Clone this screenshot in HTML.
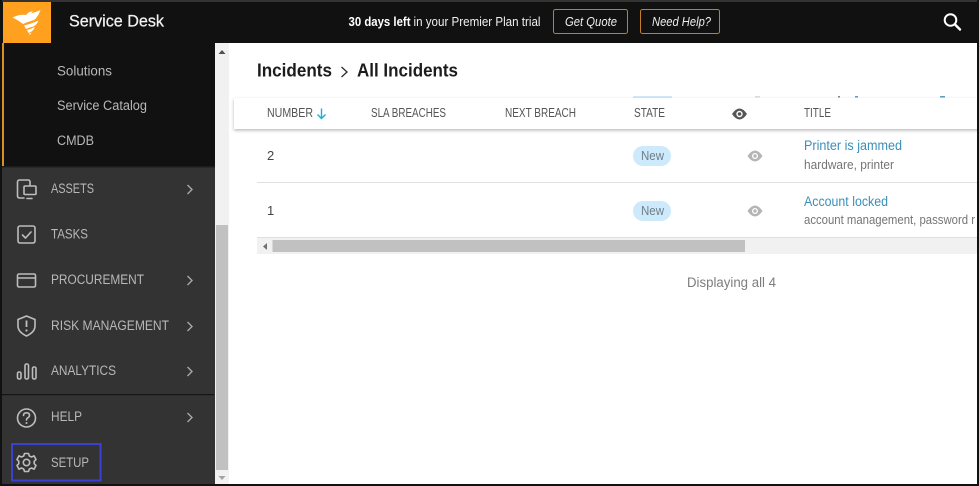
<!DOCTYPE html>
<html><head><meta charset="utf-8"><title>Service Desk</title>
<style>
html,body{margin:0;padding:0;background:#fff;width:979px;height:486px;overflow:hidden}
svg{display:block}
text{font-family:"Liberation Sans",sans-serif}
.nav{font-size:13.5px;fill:#b8b8b8}
.hd{font-size:12.5px;fill:#555}
.ic{fill:none;stroke:#bdbdbd;stroke-width:1.6;stroke-linecap:round;stroke-linejoin:round}
.chev{fill:none;stroke:#a8a8a8;stroke-width:1.4}
</style></head><body>
<svg width="979" height="486" viewBox="0 0 979 486" xmlns="http://www.w3.org/2000/svg">
<rect width="979" height="486" fill="#fff"/>
<!-- header -->
<rect x="0" y="0" width="979" height="43" fill="#111"/>
<rect x="0" y="0" width="979" height="2" fill="#333"/>
<rect x="3" y="2" width="48" height="41" fill="#ffa01f"/>
<!-- logo -->
<path d="M12.500 17.500 Q20 14 26 15 Q29 11 33 11.500 L31 13.500 Q36 12 40.500 10 Q38 17 34 20 Q26 22.500 23 24 Q18 20 12.500 17.500Z" fill="#fff"/>
<path d="M24 25.500 Q32 23.500 38.500 20.500 Q37 24.500 33.500 26.500 Q29 27.500 26 29Z" fill="#fff"/>
<path d="M27 30 Q31 29 35 27 Q33 31 30.500 32 L28.500 33Z" fill="#fff"/>
<path d="M29 33.500 L31.500 32.500 L30 35Z" fill="#fff"/>
<text x="69" y="26.500" font-size="17" fill="#f2f2f2" stroke="#f2f2f2" stroke-width=".25" textLength="95" lengthAdjust="spacingAndGlyphs">Service Desk</text>
<text x="348.500" y="26" font-size="12.500" fill="#fff" font-weight="700" textLength="62" lengthAdjust="spacingAndGlyphs">30 days left</text>
<text x="413.500" y="26" font-size="12.500" fill="#f0f0f0" textLength="127" lengthAdjust="spacingAndGlyphs">in your Premier Plan trial</text>
<rect x="553.500" y="9.500" width="74" height="24" rx="2" fill="none" stroke="#c47f25" stroke-width="1"/>
<text x="565" y="26" font-size="12.500" font-style="italic" fill="#efefef" textLength="52" lengthAdjust="spacingAndGlyphs">Get Quote</text>
<rect x="640.500" y="9.500" width="79" height="24" rx="2" fill="none" stroke="#c47f25" stroke-width="1"/>
<text x="652" y="26" font-size="12.500" font-style="italic" fill="#efefef" textLength="59" lengthAdjust="spacingAndGlyphs">Need Help?</text>
<circle cx="950.500" cy="20" r="5.800" fill="none" stroke="#fff" stroke-width="2"/>
<path d="M955 24.500 L960 29.500" stroke="#fff" stroke-width="2.400" fill="none" stroke-linecap="round"/>

<!-- sidebar -->
<rect x="0" y="43" width="215" height="124" fill="#111"/>
<rect x="2" y="43" width="2" height="123" fill="#d98f22"/>
<rect x="0" y="167" width="215" height="319" fill="#333"/>
<rect x="0" y="166" width="215" height="1.500" fill="#1c1c1c"/>
<rect x="0" y="43" width="2" height="443" fill="#111"/>
<rect x="2" y="394" width="212" height="1.200" fill="#161616"/>
<text x="57" y="75.500" font-size="13.500" fill="#b8b8b8" textLength="55" lengthAdjust="spacingAndGlyphs">Solutions</text>
<text x="57" y="110" font-size="13.500" fill="#b8b8b8" textLength="90" lengthAdjust="spacingAndGlyphs">Service Catalog</text>
<text x="57" y="145" font-size="13.500" fill="#b8b8b8" textLength="37" lengthAdjust="spacingAndGlyphs">CMDB</text>

<text class="nav" x="51" y="193" textLength="43" lengthAdjust="spacingAndGlyphs">ASSETS</text>
<text class="nav" x="51" y="238.500" textLength="37" lengthAdjust="spacingAndGlyphs">TASKS</text>
<text class="nav" x="51" y="284" textLength="93" lengthAdjust="spacingAndGlyphs">PROCUREMENT</text>
<text class="nav" x="51" y="330" textLength="118" lengthAdjust="spacingAndGlyphs">RISK MANAGEMENT</text>
<text class="nav" x="51" y="375" textLength="65" lengthAdjust="spacingAndGlyphs">ANALYTICS</text>
<text class="nav" x="51" y="421" textLength="31" lengthAdjust="spacingAndGlyphs">HELP</text>
<text class="nav" x="51" y="467" textLength="38" lengthAdjust="spacingAndGlyphs">SETUP</text>
<path class="chev" d="M187.500 185 L192 189.500 L187.500 194"/>
<path class="chev" d="M187.500 276 L192 280.500 L187.500 285"/>
<path class="chev" d="M187.500 322 L192 326.500 L187.500 331"/>
<path class="chev" d="M187.500 367 L192 371.500 L187.500 376"/>
<path class="chev" d="M187.500 413 L192 417.500 L187.500 422"/>
<!-- assets icon -->
<path class="ic" d="M24 198 H20 Q17.500 198 17.500 196 V182 Q17.500 180 20 180 H28 Q30 180 30 182 V185"/>
<rect class="ic" x="24" y="186" width="12" height="8.500" rx="1"/>
<path class="ic" d="M27 198.500 H32"/>
<!-- tasks icon -->
<rect class="ic" x="18" y="226" width="17" height="17" rx="2"/>
<path class="ic" d="M22.500 235 L25.500 238 L31 232"/>
<!-- procurement icon -->
<rect class="ic" x="17.500" y="274" width="18" height="13" rx="1.500"/>
<path class="ic" d="M18 278 H35"/>
<!-- risk icon -->
<path class="ic" d="M26.500 316 L35 319.500 V326 Q35 332 26.500 336 Q18 332 18 326 V319.500Z"/>
<path d="M26.500 320.500 V327" stroke="#bdbdbd" stroke-width="1.800" fill="none"/>
<circle cx="26.500" cy="330.500" r="1.100" fill="#bdbdbd"/>
<!-- analytics icon -->
<rect class="ic" x="17.500" y="372" width="3.500" height="7" rx="1.500"/>
<rect class="ic" x="25" y="364" width="3.500" height="15" rx="1.500"/>
<rect class="ic" x="32.500" y="367" width="3.500" height="12" rx="1.500"/>
<!-- help icon -->
<circle class="ic" cx="26.500" cy="418" r="9"/>
<path class="ic" d="M23.500 415.500 Q23.500 412.800 26.500 412.800 Q29.500 412.800 29.500 415.300 Q29.500 417 27.800 417.800 Q26.500 418.500 26.500 420"/>
<circle cx="26.500" cy="423" r="1" fill="#bdbdbd"/>
<!-- setup icon -->
<path class="ic" d="M24.500 453.500 H28.500 L29.300 456 L31.600 457 L34 455.800 L36 459.500 L34.200 461.300 V463.700 L36 465.500 L34 469.200 L31.600 468 L29.300 469 L28.500 471.500 H24.500 L23.700 469 L21.400 468 L19 469.200 L17 465.500 L18.800 463.700 V461.300 L17 459.500 L19 455.800 L21.400 457 L23.700 456Z"/>
<circle class="ic" cx="26.500" cy="462.500" r="3.200"/>
<rect x="12" y="444" width="88.500" height="36.500" fill="none" stroke="#3b40d0" stroke-width="2"/>

<!-- sidebar scrollbar -->
<rect x="215" y="43" width="14" height="443" fill="#f1f1f1"/>
<rect x="216" y="225" width="12" height="245" fill="#c1c1c1"/>
<path d="M218.500 54 L222 50 L225.500 54Z" fill="#505050"/>
<path d="M218.500 476 L222 480 L225.500 476Z" fill="#a3a3a3"/>

<!-- breadcrumb -->
<text x="257" y="76.500" font-size="18" font-weight="700" fill="#1c1c1c" textLength="75" lengthAdjust="spacingAndGlyphs">Incidents</text>
<path d="M341.500 67 L347 72 L341.500 77" fill="none" stroke="#333" stroke-width="1.400"/>
<text x="357" y="76.500" font-size="18" font-weight="700" fill="#1c1c1c" textLength="101" lengthAdjust="spacingAndGlyphs">All Incidents</text>

<!-- clipped content above table header -->
<rect x="633" y="96" width="39" height="2" fill="#cfeafb"/>
<rect x="755" y="96" width="5" height="1.500" fill="#ddd"/>
<rect x="838" y="96" width="2" height="1.500" fill="#888"/>
<rect x="855" y="96" width="3" height="1.500" fill="#5d9fc0"/>
<rect x="940" y="96" width="5" height="1.500" fill="#5d9fc0"/>

<!-- table head -->
<defs><filter id="s" x="-2%" y="-20%" width="104%" height="150%"><feDropShadow dx="0" dy="1.500" stdDeviation="1.500" flood-color="#000" flood-opacity=".28"/></filter></defs>
<rect x="234" y="98" width="745" height="31" fill="#fff" filter="url(#s)"/>
<text class="hd" x="267" y="117" textLength="46" lengthAdjust="spacingAndGlyphs">NUMBER</text>
<path d="M321.500 108.500 V118 M317.500 114.500 L321.500 118.500 L325.500 114.500" fill="none" stroke="#1eaed6" stroke-width="1.400"/>
<text class="hd" x="371" y="117" textLength="75" lengthAdjust="spacingAndGlyphs">SLA BREACHES</text>
<text class="hd" x="505" y="117" textLength="71" lengthAdjust="spacingAndGlyphs">NEXT BREACH</text>
<text class="hd" x="634" y="117" textLength="31" lengthAdjust="spacingAndGlyphs">STATE</text>
<path d="M732 114 Q739.500 103 747 114 Q739.500 125 732 114Z" fill="#555"/>
<circle cx="739.500" cy="114" r="3.200" fill="#fff"/><circle cx="739.500" cy="114" r="1.800" fill="#555"/>
<text class="hd" x="804" y="117" textLength="27" lengthAdjust="spacingAndGlyphs">TITLE</text>

<!-- rows -->
<text x="267" y="160" font-size="13" fill="#444">2</text>
<rect x="633" y="146" width="38" height="20" rx="10" fill="#cdeafc"/>
<text x="641" y="160" font-size="12.500" fill="#6e7e88" textLength="23" lengthAdjust="spacingAndGlyphs">New</text>
<path d="M747.500 156 Q755 145 762.500 156 Q755 167 747.500 156Z" fill="#b5b5b5"/>
<circle cx="755" cy="156" r="3" fill="#fff"/><circle cx="755" cy="156" r="1.700" fill="#b5b5b5"/>
<text x="804" y="150" font-size="13.500" fill="#3a8fb8" textLength="98" lengthAdjust="spacingAndGlyphs">Printer is jammed</text>
<text x="804" y="169" font-size="12.500" fill="#757575" textLength="90" lengthAdjust="spacingAndGlyphs">hardware, printer</text>
<rect x="257" y="182" width="720" height="1" fill="#e0e0e0"/>

<text x="267" y="215" font-size="13" fill="#444">1</text>
<rect x="633" y="201" width="38" height="20" rx="10" fill="#cdeafc"/>
<text x="641" y="215" font-size="12.500" fill="#6e7e88" textLength="23" lengthAdjust="spacingAndGlyphs">New</text>
<path d="M747.500 211 Q755 200 762.500 211 Q755 222 747.500 211Z" fill="#b5b5b5"/>
<circle cx="755" cy="211" r="3" fill="#fff"/><circle cx="755" cy="211" r="1.700" fill="#b5b5b5"/>
<text x="804" y="206" font-size="13.500" fill="#3a8fb8" textLength="84" lengthAdjust="spacingAndGlyphs">Account locked</text>
<text x="804" y="224" font-size="12.500" fill="#757575" textLength="171" lengthAdjust="spacingAndGlyphs">account management, password r</text>
<rect x="257" y="237" width="720" height="1" fill="#e0e0e0"/>

<!-- horizontal scrollbar -->
<rect x="257" y="238" width="720" height="16" fill="#f1f1f1"/>
<rect x="272.500" y="240" width="472.500" height="12" fill="#c1c1c1"/>
<path d="M267 243 L263 246.500 L267 250Z" fill="#707070"/>

<text x="687" y="287" font-size="13.500" fill="#7d7d7d" textLength="89" lengthAdjust="spacingAndGlyphs">Displaying all 4</text>

<!-- frame edges -->
<rect x="977" y="0" width="2" height="486" fill="#111"/>
<rect x="0" y="484" width="979" height="2" fill="#111"/>
<rect x="0" y="0" width="2" height="486" fill="#111"/>
</svg>
</body></html>
